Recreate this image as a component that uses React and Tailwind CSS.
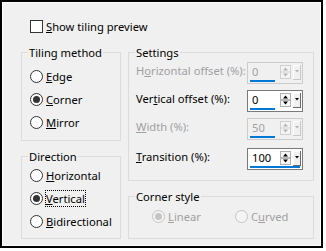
import React from "react";

const gray = "text-[#a0a0a0]";

const Radio = ({ checked, disabled }) => (
  <span
    className={`flex h-[13px] w-[13px] shrink-0 items-center justify-center rounded-full border ${
      disabled ? "border-[#c4c4c4] bg-[#f4f4f4]" : "border-[#333333] bg-white"
    }`}
  >
    {checked && (
      <span className={`h-[7px] w-[7px] rounded-full ${disabled ? "bg-[#c4c4c4]" : "bg-[#333333]"}`} />
    )}
  </span>
);

const RadioRow = ({ checked, disabled, focus, className = "", children }) => (
  <div className={`flex h-[15px] items-center gap-[3px] ${className}`}>
    <Radio checked={checked} disabled={disabled} />
    <span
      className={`leading-[15px] ${disabled ? gray : "text-black"} ${
        focus ? "outline-1 outline-dotted outline-black" : ""
      }`}
    >
      {children}
    </span>
  </div>
);

const Group = ({ title, className = "", children }) => (
  <fieldset className={`m-0 min-w-0 border border-[#dcdcdc] p-0 ${className}`}>
    <legend className="ml-[6px] px-[1px] leading-[15px] text-black">{title}</legend>
    {children}
  </fieldset>
);

// up/down arrows of the spin control
const SpinArrows = ({ disabled }) => {
  const c = disabled ? "#b4b4b4" : "#000000";
  return (
    <svg width="11" height="14" viewBox="0 0 11 14" className="shrink-0">
      <rect x="0.5" y="0.5" width="10" height="13" fill={disabled ? "#f4f4f4" : "#f7f7f7"} stroke={disabled ? "#d0d0d0" : "#b0b0b0"} />
      <line x1="1" y1="7" x2="10" y2="7" stroke={disabled ? "#d0d0d0" : "#7a7a7a"} />
      <polygon points="3,5.5 8,5.5 5.5,2.5" fill={c} />
      <polygon points="3,8.5 8,8.5 5.5,11.5" fill={c} />
    </svg>
  );
};

const DropButton = ({ disabled }) => (
  <svg width="8" height="15" viewBox="0 0 8 15" className="ml-[2px] mr-[1px] shrink-0 self-start">
    <rect x="0" y="0" width="8" height="15" fill="#f0f0f0" />
    <line x1="0.5" y1="0" x2="0.5" y2="15" stroke="#ffffff" />
    <line x1="0" y1="0.5" x2="8" y2="0.5" stroke="#ffffff" />
    <line x1="7.5" y1="0" x2="7.5" y2="15" stroke={disabled ? "#c8c8c8" : "#696969"} />
    <line x1="0" y1="14.5" x2="8" y2="14.5" stroke={disabled ? "#c8c8c8" : "#696969"} />
    <polygon points="2,5 6,5 4,7.5" fill={disabled ? "#b4b4b4" : "#000000"} />
  </svg>
);

const Spin = ({ value, pct, disabled }) => (
  <div
    className={`flex h-[22px] w-[56px] shrink-0 flex-col border ${
      disabled ? "border-[#cccccc] bg-[#f0f0f0]" : "border-[#7a7a7a] bg-white"
    }`}
  >
    <div className="mt-[2px] flex h-[14px] items-start">
      <span className={`ml-[4px] flex-1 leading-[14px] ${disabled ? gray : "text-black"}`}>{value}</span>
      <SpinArrows disabled={disabled} />
      <DropButton disabled={disabled} />
    </div>
    <div className="mx-[2px] mt-[1px] h-[2px]">
      <div className="h-full bg-[#0078d7]" style={{ width: `${pct}%` }} />
    </div>
  </div>
);

const SettingRow = ({ label, value, pct, disabled, className = "" }) => (
  <div className={`flex items-start justify-between pl-[7px] pr-[10px] ${className}`}>
    <span className={`mt-[1px] leading-[15px] ${disabled ? gray : "text-black"}`}>{label}</span>
    <Spin value={value} pct={pct} disabled={disabled} />
  </div>
);

export default function App() {
  return (
    <div className="h-[251px] w-[326px] bg-white font-['Noto_Sans',sans-serif] text-[11.2px]">
      <div className="h-[248px] w-[323px] border-2 border-black bg-[#f0f0f0] pl-[19px] pt-[17px] shadow-[inset_1px_1px_0_#ffffff,inset_-1px_-1px_0_#ffffff]">
        {/* show preview */}
        <div className="ml-[9px] flex h-[15px] items-center gap-[3px]">
          <span className="h-[13px] w-[13px] shrink-0 border border-[#333333] bg-white" />
          <span className="leading-[15px] text-black">
            <u>S</u>how tiling preview
          </span>
        </div>

        <div className="mt-[11px] flex gap-[7px]">
          <div className="flex w-[100px] flex-col">
            <Group title="Tiling method">
              <div className="mt-[9px] flex flex-col gap-[8px] pb-[10px] pl-[8px]">
                <RadioRow>
                  <u>E</u>dge
                </RadioRow>
                <RadioRow checked>
                  <u>C</u>orner
                </RadioRow>
                <RadioRow>
                  <u>M</u>irror
                </RadioRow>
              </div>
            </Group>
            <Group title="Direction" className="mt-[8px]">
              <div className="mt-[4px] flex flex-col gap-[8px] pb-[9px] pl-[8px]">
                <RadioRow>
                  <u>H</u>orizontal
                </RadioRow>
                <RadioRow checked focus>
                  <u>V</u>ertical
                </RadioRow>
                <RadioRow>
                  <u>B</u>idirectional
                </RadioRow>
              </div>
            </Group>
          </div>

          <div className="flex w-[186px] flex-col">
            <Group title="Settings">
              <div className="mt-[2px] flex flex-col pb-[10px]">
                <SettingRow
                  disabled
                  value="0"
                  pct={50}
                  label={
                    <>
                      H<u>o</u>rizontal offset (%):
                    </>
                  }
                />
                <SettingRow
                  className="mt-[6px]"
                  value="0"
                  pct={50}
                  label={
                    <>
                      Ver<u>t</u>ical offset (%):
                    </>
                  }
                />
                <SettingRow
                  className="mt-[6px]"
                  disabled
                  value="50"
                  pct={50}
                  label={
                    <>
                      <u>W</u>idth (%):
                    </>
                  }
                />
                <SettingRow
                  className="mt-[8px]"
                  value="100"
                  pct={100}
                  label={
                    <>
                      <u>T</u>ransition (%):
                    </>
                  }
                />
              </div>
            </Group>
            <Group title="Corner style" className="mt-[8px]">
              <div className="mt-[5px] flex pb-[14px] pl-[23px]">
                <RadioRow checked disabled className="w-[83px]">
                  <u>L</u>inear
                </RadioRow>
                <RadioRow disabled>
                  C<u>u</u>rved
                </RadioRow>
              </div>
            </Group>
          </div>
        </div>
      </div>
    </div>
  );
}
